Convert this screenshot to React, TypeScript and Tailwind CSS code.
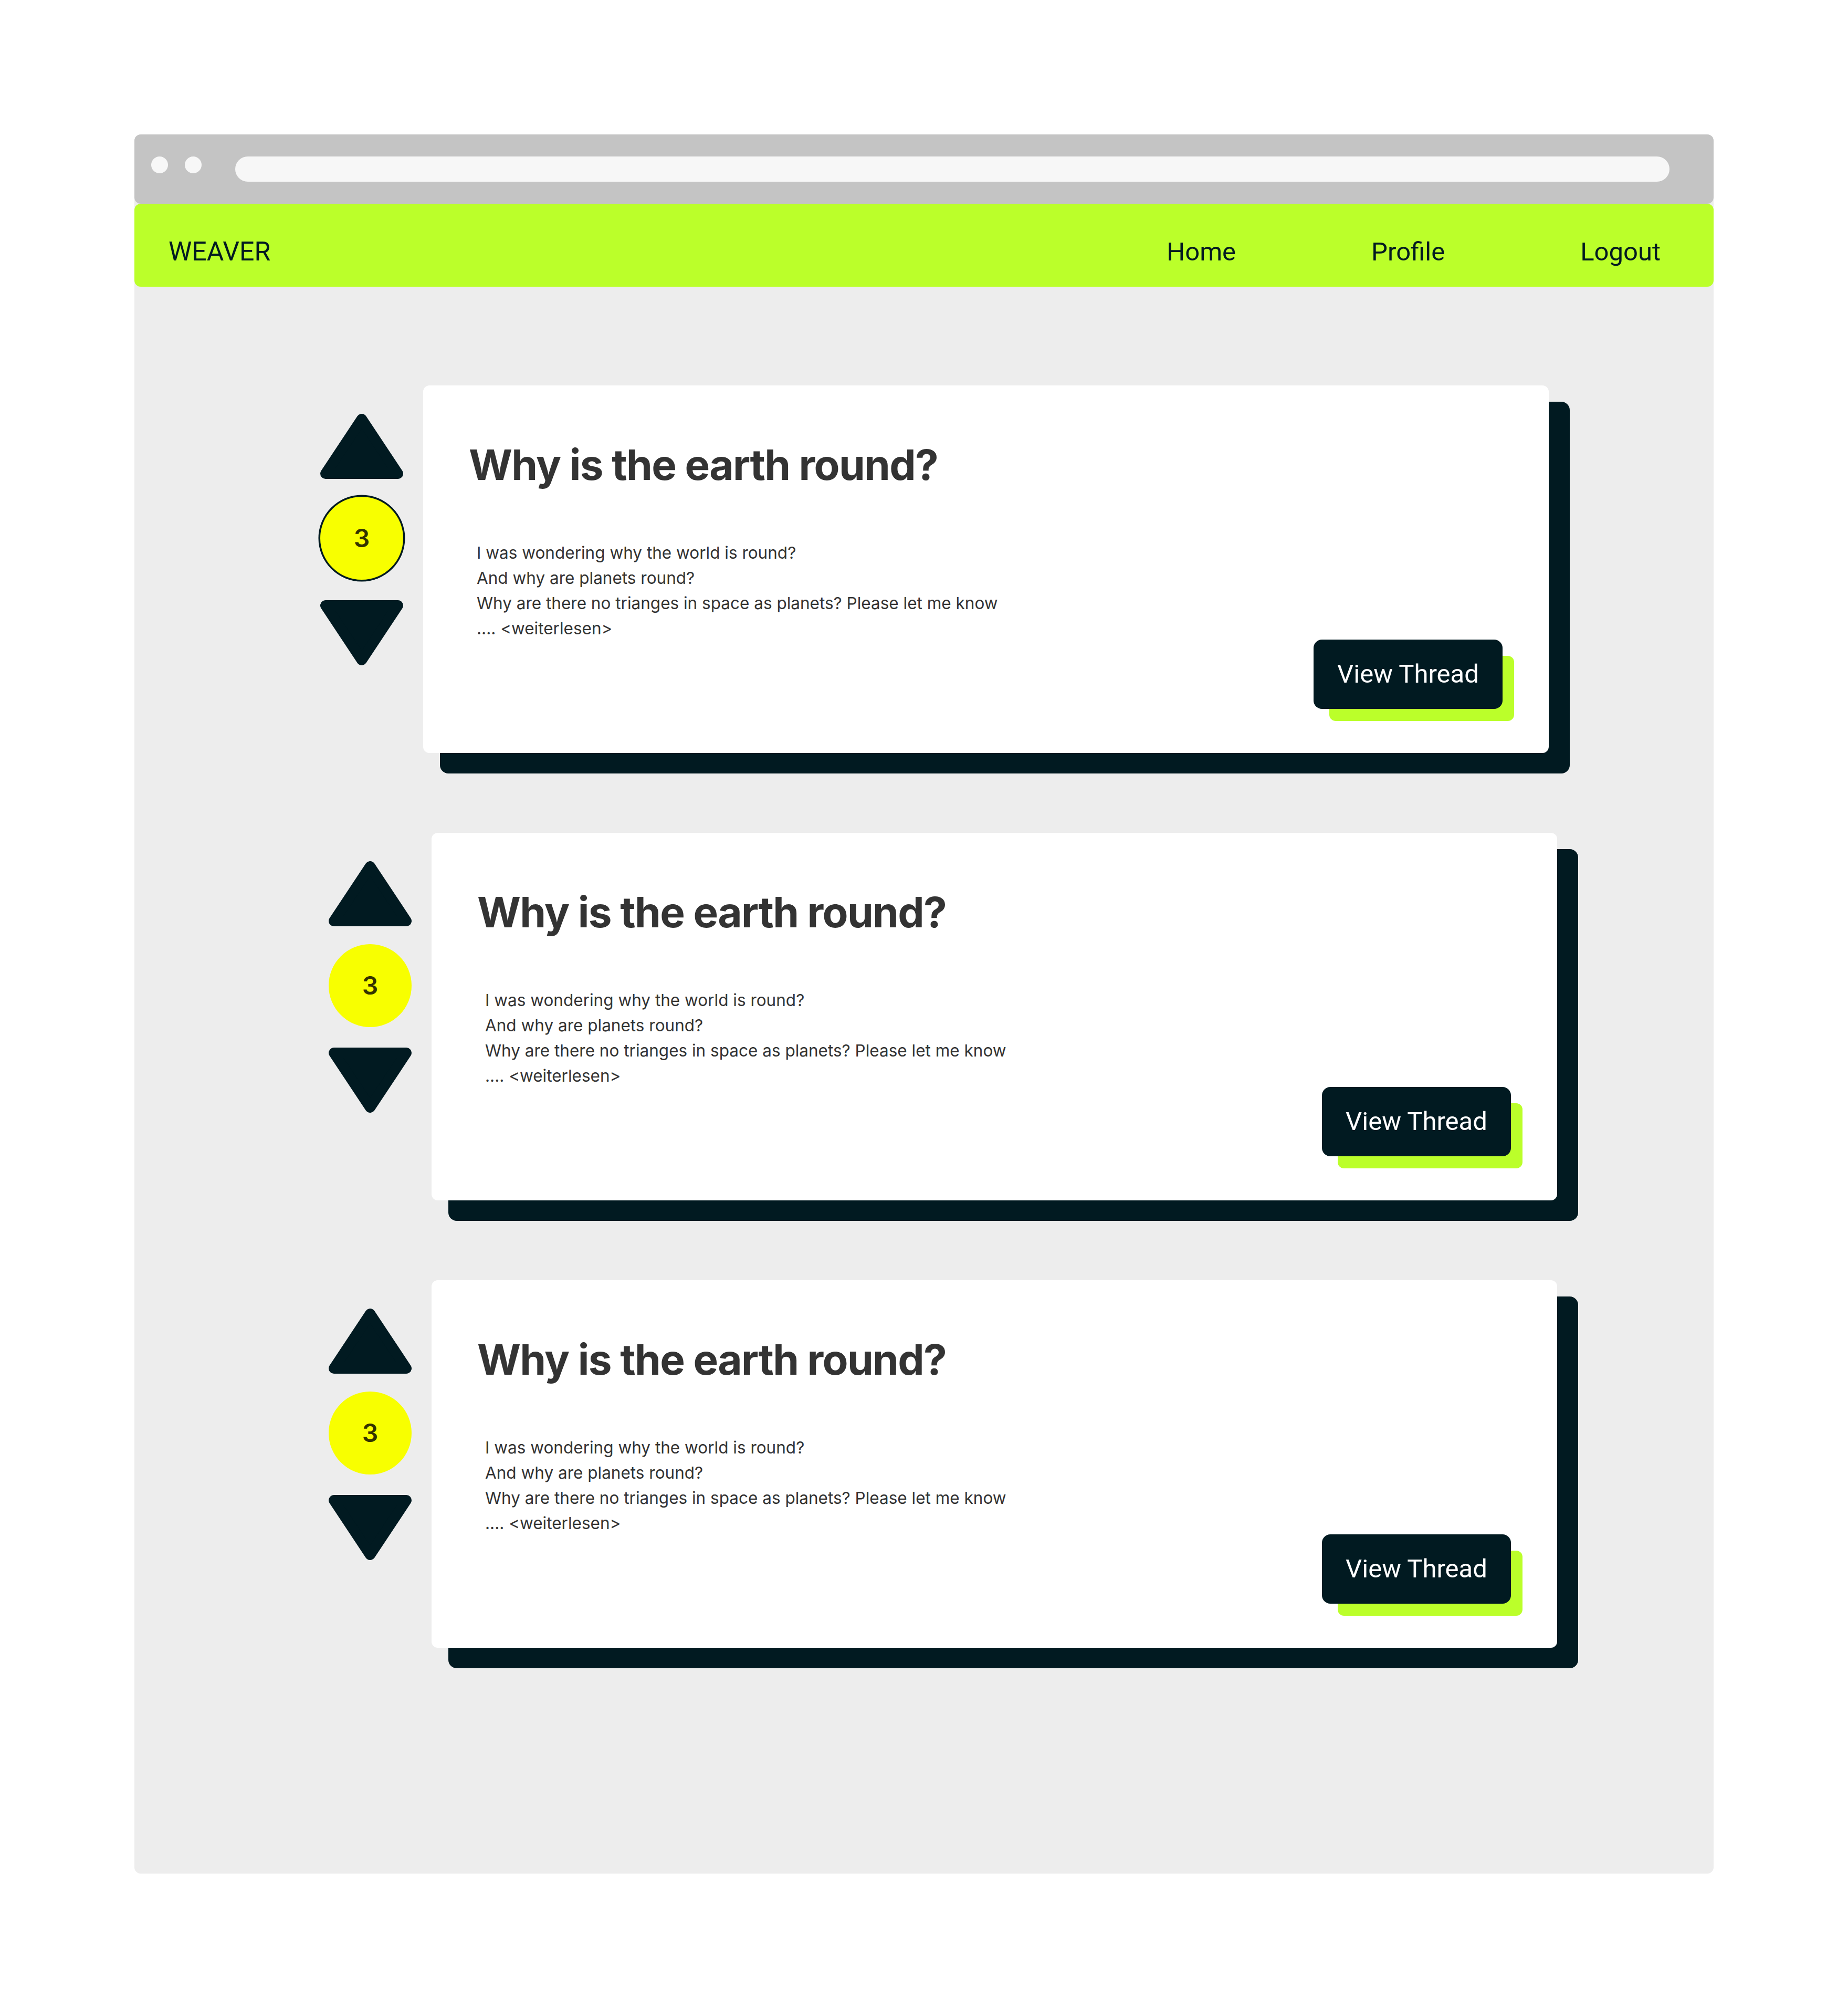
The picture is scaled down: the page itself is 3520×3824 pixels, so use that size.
import React from 'react';

type Post = {
  id: number;
  title: string;
  lines: string[];
  votes: number;
  shifted?: boolean;
  ringed?: boolean;
};

const POSTS: Post[] = [
  {
    id: 1,
    title: 'Why is the earth round?',
    lines: [
      'I was wondering why the world is round?',
      'And why are planets round?',
      'Why are there no trianges in space as planets? Please let me know',
      '.... <weiterlesen>',
    ],
    votes: 3,
    shifted: true,
    ringed: true,
  },
  {
    id: 2,
    title: 'Why is the earth round?',
    lines: [
      'I was wondering why the world is round?',
      'And why are planets round?',
      'Why are there no trianges in space as planets? Please let me know',
      '.... <weiterlesen>',
    ],
    votes: 3,
  },
  {
    id: 3,
    title: 'Why is the earth round?',
    lines: [
      'I was wondering why the world is round?',
      'And why are planets round?',
      'Why are there no trianges in space as planets? Please let me know',
      '.... <weiterlesen>',
    ],
    votes: 3,
  },
];

function Arrow({ dir }: { dir: 'up' | 'down' }) {
  const points = dir === 'up' ? '79,10 148,114 10,114' : '10,10 148,10 79,114';
  return (
    <svg width="158" height="124" viewBox="0 0 158 124" className="block">
      <polygon points={points} fill="#011a21" stroke="#011a21" strokeWidth="20" strokeLinejoin="round" />
    </svg>
  );
}

function VoteColumn({ votes, ringed }: { votes: number; ringed?: boolean }) {
  return (
    <div className="mt-[54px] flex w-[158px] shrink-0 flex-col items-center">
      <button className="block">
        <Arrow dir="up" />
      </button>
      <div
        className={`mt-[34px] flex h-[158px] w-[158px] items-center justify-center rounded-full bg-[#f8ff00] font-['Inter',sans-serif] text-[48px] font-semibold text-[#333300] ${
          ringed ? 'ring-[3.5px] ring-[#011a21]' : ''
        }`}
      >
        {votes}
      </div>
      <button className="mt-[39px] block">
        <Arrow dir="down" />
      </button>
    </div>
  );
}

function PostCard({ post }: { post: Post }) {
  return (
    <div className={`flex items-start gap-[38px] ${post.shifted ? '-ml-[16px]' : ''}`}>
      <VoteColumn votes={post.votes} ringed={post.ringed} />
      <div className="flex h-[700px] w-[2144px] flex-col rounded-[12px] bg-white pt-[111px] pb-[84px] pl-[87px] pr-[88px] font-['Inter',sans-serif] text-[#333333] shadow-[36px_35px_0_4px_#011a21]">
        <h2 className="text-[80px] leading-[80px] font-bold tracking-[-0.021em]">{post.title}</h2>
        <div className="mt-[104px] ml-[15px] text-[31.5px] leading-[48px]">
          {post.lines.map((line) => (
            <p key={line}>{line}</p>
          ))}
        </div>
        <div className="-mt-[3px] flex justify-end">
          <button className="flex h-[132px] w-[360px] items-center justify-center rounded-[16px] bg-[#011a21] font-['Roboto',sans-serif] text-[49px] text-white shadow-[26px_27px_0_-4px_#bbff2a]">
            View Thread
          </button>
        </div>
      </div>
    </div>
  );
}

export default function App() {
  return (
    <div className="min-h-screen bg-white pt-[256px] pl-[256px]">
      <div className="flex h-[3312px] w-[3008px] flex-col rounded-[12px] bg-[#ededed]">
        {/* browser chrome */}
        <div className="flex h-[132px] items-start rounded-[12px] bg-[#c4c4c4] pt-[42px] pl-[32px] pr-[84px]">
          <div className="flex gap-[32px]">
            <span className="block h-[32px] w-[32px] rounded-full bg-[#f7f7f7]" />
            <span className="block h-[32px] w-[32px] rounded-full bg-[#f7f7f7]" />
          </div>
          <div className="ml-[64px] h-[48px] flex-1 rounded-full bg-[#f7f7f7]" />
        </div>

        {/* nav */}
        <nav className="flex h-[158px] items-start justify-between rounded-[12px] bg-[#bbff2a] pt-[64px] pl-[65px] pr-[101px] font-['Roboto',sans-serif] text-[49px] leading-[55px] text-[#011a21]">
          <span className="text-[50px]">WEAVER</span>
          <div className="flex gap-[258px]">
            <a>Home</a>
            <a>Profile</a>
            <a>Logout</a>
          </div>
        </nav>

        <main className="flex flex-col gap-[152px] pt-[188px] pl-[370px]">
          {POSTS.map((post) => (
            <PostCard key={post.id} post={post} />
          ))}
        </main>
      </div>
    </div>
  );
}
